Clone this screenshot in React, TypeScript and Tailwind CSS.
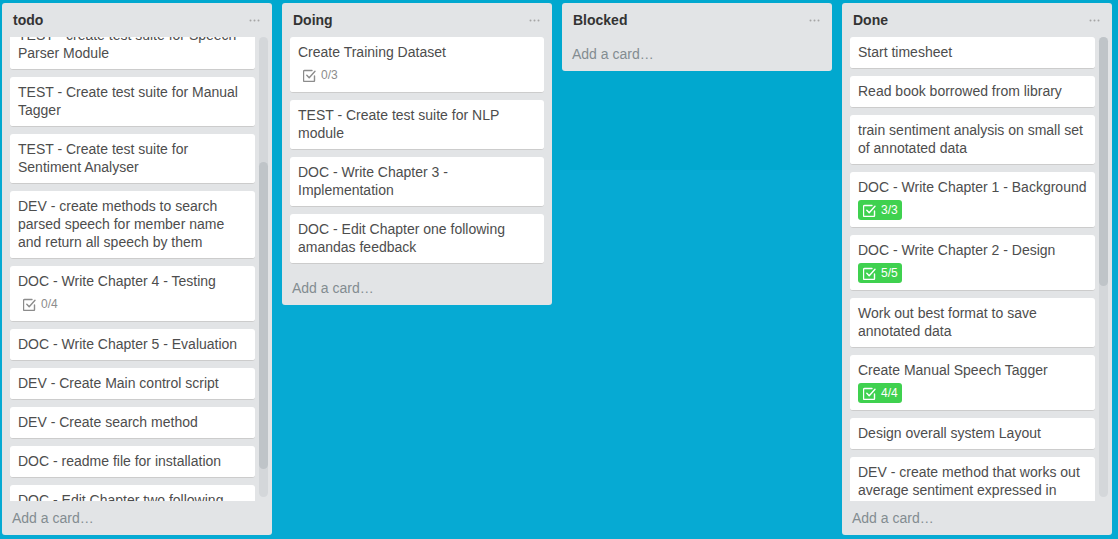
import React from "react";

// ─── Types ───────────────────────────────────────────────────────────────────
type Card = { title: string; check?: string; complete?: boolean };

type List = {
  name: string;
  cards: Card[];
  scroll?: { offset: number; thumbTop: number; thumbHeight: number };
};

// ─── Data ────────────────────────────────────────────────────────────────────
const LISTS: List[] = [
  {
    name: "todo",
    scroll: { offset: 17, thumbTop: 125, thumbHeight: 307 },
    cards: [
      { title: "TEST - create test suite for Speech Parser Module" },
      { title: "TEST - Create test suite for Manual Tagger" },
      { title: "TEST - Create test suite for Sentiment Analyser" },
      { title: "DEV - create methods to search parsed speech for member name and return all speech by them" },
      { title: "DOC - Write Chapter 4 - Testing", check: "0/4" },
      { title: "DOC - Write Chapter 5 - Evaluation" },
      { title: "DEV - Create Main control script" },
      { title: "DEV - Create search method" },
      { title: "DOC - readme file for installation" },
      { title: "DOC - Edit Chapter two following amandas feedback" },
    ],
  },
  {
    name: "Doing",
    cards: [
      { title: "Create Training Dataset", check: "0/3" },
      { title: "TEST - Create test suite for NLP module" },
      { title: "DOC - Write Chapter 3 - Implementation" },
      { title: "DOC - Edit Chapter one following amandas feedback" },
    ],
  },
  { name: "Blocked", cards: [] },
  {
    name: "Done",
    scroll: { offset: 0, thumbTop: 0, thumbHeight: 249 },
    cards: [
      { title: "Start timesheet" },
      { title: "Read book borrowed from library" },
      { title: "train sentiment analysis on small set of annotated data" },
      { title: "DOC - Write Chapter 1 - Background", check: "3/3", complete: true },
      { title: "DOC - Write Chapter 2 - Design", check: "5/5", complete: true },
      { title: "Work out best format to save annotated data" },
      { title: "Create Manual Speech Tagger", check: "4/4", complete: true },
      { title: "Design overall system Layout" },
      { title: "DEV - create method that works out average sentiment expressed in each speech" },
    ],
  },
];

// ─── Icons ───────────────────────────────────────────────────────────────────
function CheckIcon() {
  return (
    <svg width="13" height="13" viewBox="0 0 13 13" fill="none" stroke="currentColor" strokeWidth="1.4" strokeLinecap="round" strokeLinejoin="round">
      <path d="M11.5 7v4.5a1 1 0 0 1-1 1h-9a1 1 0 0 1-1-1v-9a1 1 0 0 1 1-1H9" />
      <path d="M3.8 6.2l2.4 2.5L12 2.2" />
    </svg>
  );
}

function MenuDots() {
  return (
    <svg width="11" height="3" viewBox="0 0 11 3" fill="#a5a5a5">
      <circle cx="1.5" cy="1.5" r="1" />
      <circle cx="5.5" cy="1.5" r="1" />
      <circle cx="9.5" cy="1.5" r="1" />
    </svg>
  );
}

// ─── Card ────────────────────────────────────────────────────────────────────
function CardView({ card }: { card: Card }) {
  return (
    <div className="mb-[7px] rounded-[3px] border-b border-[#ccc] bg-white px-[8px] pt-[6px] pb-[7px]">
      <div className="text-[14px] leading-[18px] text-[#4d4d4d]">{card.title}</div>
      {card.check && (
        <div className="mt-[4px] flex">
          <div
            className={
              card.complete
                ? "flex h-[20px] items-center gap-[5px] rounded-[3px] bg-[#3fd14f] pl-[5px] pr-[4px] text-white"
                : "flex h-[20px] items-center gap-[5px] pl-[5px] pr-[4px] text-[#8c8c8c]"
            }
          >
            <CheckIcon />
            <span className="text-[12px] leading-[20px]">{card.check}</span>
          </div>
        </div>
      )}
    </div>
  );
}

// ─── List ────────────────────────────────────────────────────────────────────
function ListView({ list }: { list: List }) {
  return (
    <div className="flex w-[270px] shrink-0 flex-col self-start rounded-[3px] bg-[#e2e4e6]">
      <div className="flex h-[34px] items-center justify-between pl-[11px] pr-[12px]">
        <span className="text-[14px] font-bold text-[#333]">{list.name}</span>
        <MenuDots />
      </div>

      {list.scroll ? (
        <div className="flex h-[464px]">
          <div className="flex-1 overflow-hidden pl-[8px]">
            <div style={{ marginTop: -list.scroll.offset }}>
              {list.cards.map((c) => (
                <CardView key={c.title} card={c} />
              ))}
            </div>
          </div>
          <div className="mr-[4px] ml-[4px] mb-[4px] w-[9px] rounded-[5px] bg-[#d4d7da]">
            <div
              className="rounded-[5px] bg-[#bfc4c8]"
              style={{ marginTop: list.scroll.thumbTop, height: list.scroll.thumbHeight }}
            />
          </div>
        </div>
      ) : (
        list.cards.length > 0 && (
          <div className="px-[8px]">
            {list.cards.map((c) => (
              <CardView key={c.title} card={c} />
            ))}
          </div>
        )
      )}

      <div className="flex h-[34px] items-center px-[10px] text-[14px] text-[#838c91]">Add a card…</div>
    </div>
  );
}

// ─── Main ────────────────────────────────────────────────────────────────────
export default function App() {
  return (
    <div
      className="flex h-[539px] w-[1118px] gap-[10px] overflow-hidden bg-[linear-gradient(to_bottom,#01a8cf_170px,#06aad3_170px)] px-[2px] pt-[3px]"
      style={{ fontFamily: '"Liberation Sans", Arial, sans-serif' }}
    >
      {LISTS.map((l) => (
        <ListView key={l.name} list={l} />
      ))}
    </div>
  );
}
